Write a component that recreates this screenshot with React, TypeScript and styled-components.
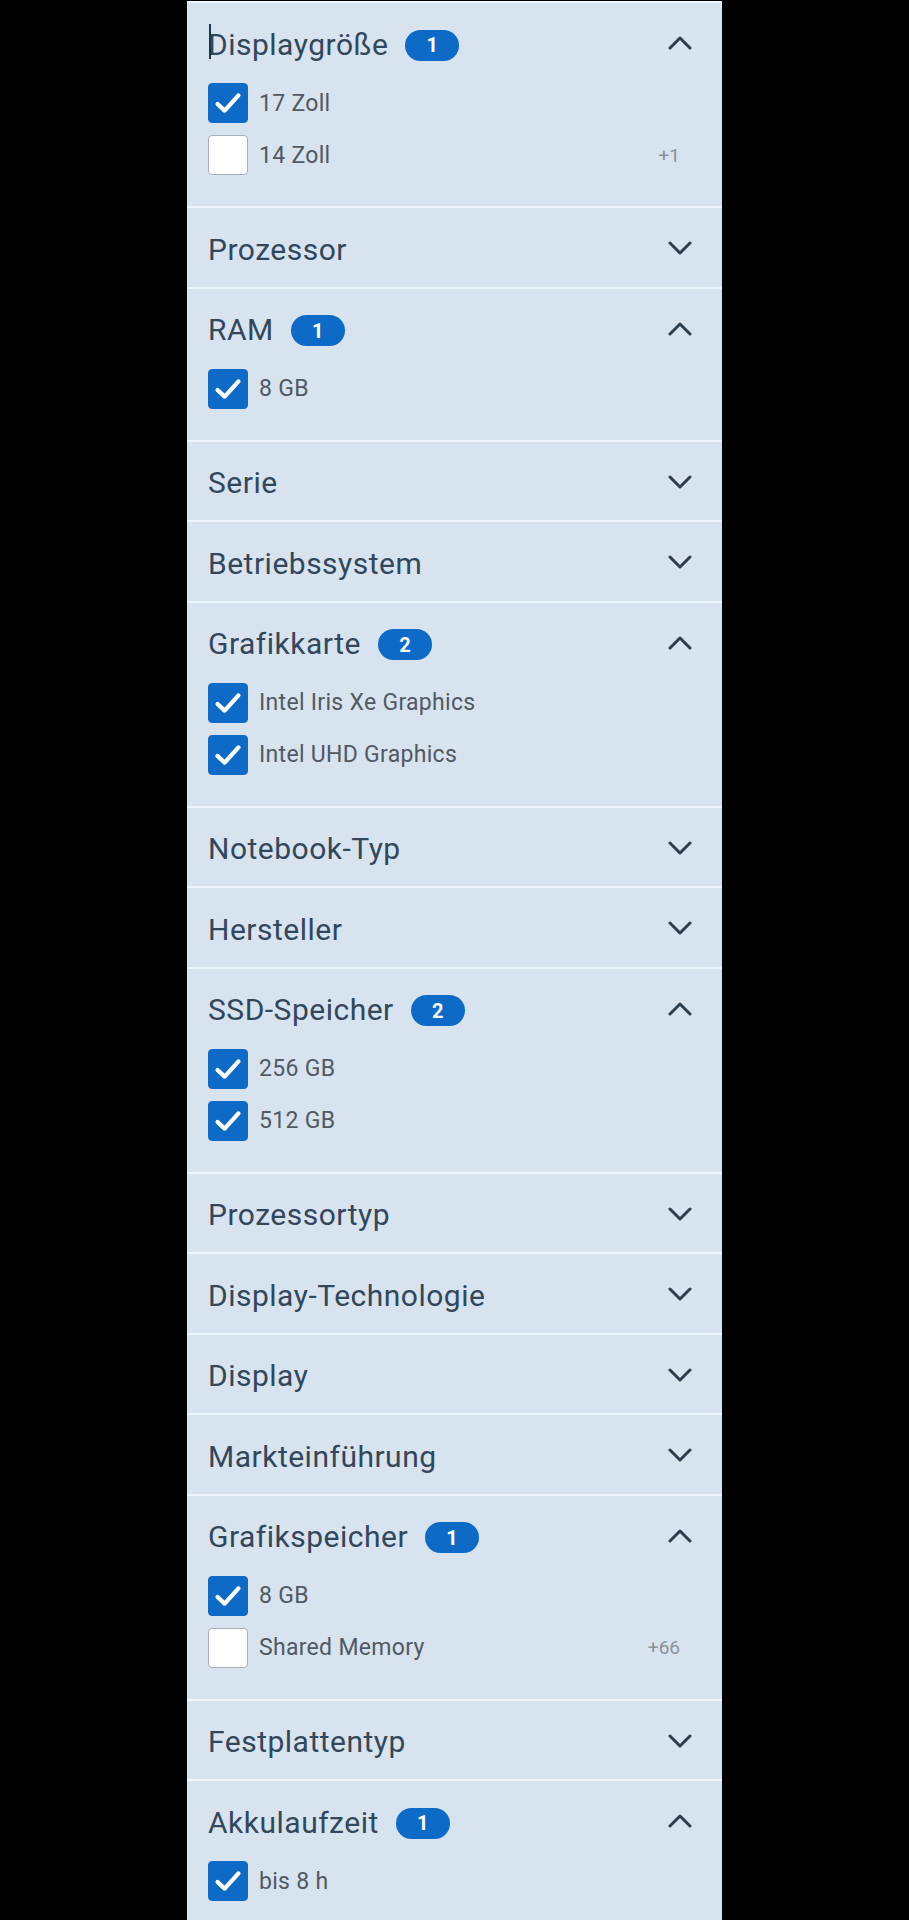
import React from "react";
import styled, { createGlobalStyle } from "styled-components";

type Option = { label: string; checked: boolean; more?: string };
type Section = { title: string; badge?: number; open: boolean; options?: Option[]; caret?: boolean };

const sections: Section[] = [
  {
    title: "Displaygröße",
    badge: 1,
    open: true,
    caret: true,
    options: [
      { label: "17 Zoll", checked: true },
      { label: "14 Zoll", checked: false, more: "+1" },
    ],
  },
  { title: "Prozessor", open: false },
  { title: "RAM", badge: 1, open: true, options: [{ label: "8 GB", checked: true }] },
  { title: "Serie", open: false },
  { title: "Betriebssystem", open: false },
  {
    title: "Grafikkarte",
    badge: 2,
    open: true,
    options: [
      { label: "Intel Iris Xe Graphics", checked: true },
      { label: "Intel UHD Graphics", checked: true },
    ],
  },
  { title: "Notebook-Typ", open: false },
  { title: "Hersteller", open: false },
  {
    title: "SSD-Speicher",
    badge: 2,
    open: true,
    options: [
      { label: "256 GB", checked: true },
      { label: "512 GB", checked: true },
    ],
  },
  { title: "Prozessortyp", open: false },
  { title: "Display-Technologie", open: false },
  { title: "Display", open: false },
  { title: "Markteinführung", open: false },
  {
    title: "Grafikspeicher",
    badge: 1,
    open: true,
    options: [
      { label: "8 GB", checked: true },
      { label: "Shared Memory", checked: false, more: "+66" },
    ],
  },
  { title: "Festplattentyp", open: false },
  { title: "Akkulaufzeit", badge: 1, open: true, options: [{ label: "bis 8 h", checked: true }] },
];

const GlobalStyle = createGlobalStyle`
  html, body {
    margin: 0;
    padding: 0;
    background: #000;
  }
  body {
    font-family: Roboto, "Liberation Sans", sans-serif;
    min-height: 1920px;
  }
`;

const Page = styled.div`
  display: flex;
  justify-content: flex-start;
  padding: 1px 0 0 187px;
  min-height: 1920px;
  overflow: hidden;
`;

const Panel = styled.div`
  width: 535px;
  background: #d7e3ef;
`;

const Group = styled.section`
  border-top: 2px solid #eef5fb;
`;

const Header = styled.div`
  height: 78.5px;
  display: flex;
  align-items: center;
  padding: 0 30px 0 21px;
`;

const Title = styled.h3`
  position: relative;
  margin: 0;
  padding-top: 4px;
  font-size: 30px;
  font-weight: 400;
  color: #33475a;
  letter-spacing: 0.5px;
`;

const Caret = styled.span`
  position: absolute;
  left: 1px;
  top: 1px;
  width: 2px;
  height: 35px;
  background: #1c3550;
`;

const Badge = styled.span`
  margin-left: 17px;
  min-width: 54px;
  height: 31px;
  border-radius: 16px;
  background: #0d6ac7;
  color: #fff;
  font-size: 20px;
  font-weight: 700;
  display: inline-flex;
  align-items: center;
  justify-content: center;
  margin-top: 6px;
`;

const Chevron = styled.svg`
  margin-left: auto;
  margin-top: 2px;
  width: 24px;
  height: 14px;
`;

const Options = styled.ul`
  list-style: none;
  margin: 0;
  padding: 1.5px 42px 31px 21px;
  display: flex;
  flex-direction: column;
  gap: 12px;
`;

const Row = styled.li`
  display: flex;
  align-items: center;
  height: 40px;
`;

const Box = styled.span<{ $checked: boolean }>`
  width: 40px;
  height: 40px;
  box-sizing: border-box;
  border-radius: 4px;
  flex: none;
  display: flex;
  align-items: center;
  justify-content: center;
  background: ${(p) => (p.$checked ? "#0d6ac7" : "#fff")};
  border: 1px solid ${(p) => (p.$checked ? "#0d6ac7" : "#a9afb6")};
`;

const Label = styled.span`
  margin-left: 11px;
  font-size: 23px;
  letter-spacing: 0.3px;
  color: #515963;
`;

const More = styled.span`
  margin-left: auto;
  font-size: 19px;
  color: #8a929b;
`;

function Check() {
  return (
    <svg width="40" height="40" viewBox="0 0 40 40">
      <polyline
        points="9,21 16.5,28 31,12"
        fill="none"
        stroke="#fff"
        strokeWidth="4.5"
        strokeLinecap="round"
        strokeLinejoin="round"
      />
    </svg>
  );
}

function FilterGroup({ section }: { section: Section }) {
  return (
    <Group>
      <Header>
        <Title>
          {section.caret && <Caret />}
          {section.title}
        </Title>
        {section.badge !== undefined && <Badge>{section.badge}</Badge>}
        <Chevron viewBox="0 0 24 14">
          <polyline
            points={section.open ? "2,12 12,2 22,12" : "2,2 12,12 22,2"}
            fill="none"
            stroke="#2c3d4d"
            strokeWidth="3"
            strokeLinecap="round"
            strokeLinejoin="round"
          />
        </Chevron>
      </Header>
      {section.open && section.options && (
        <Options>
          {section.options.map((o) => (
            <Row key={o.label}>
              <Box $checked={o.checked}>{o.checked && <Check />}</Box>
              <Label>{o.label}</Label>
              {o.more && <More>{o.more}</More>}
            </Row>
          ))}
        </Options>
      )}
    </Group>
  );
}

export default function App() {
  return (
    <>
      <GlobalStyle />
      <Page>
        <Panel>
          {sections.map((s) => (
            <FilterGroup key={s.title} section={s} />
          ))}
        </Panel>
      </Page>
    </>
  );
}
